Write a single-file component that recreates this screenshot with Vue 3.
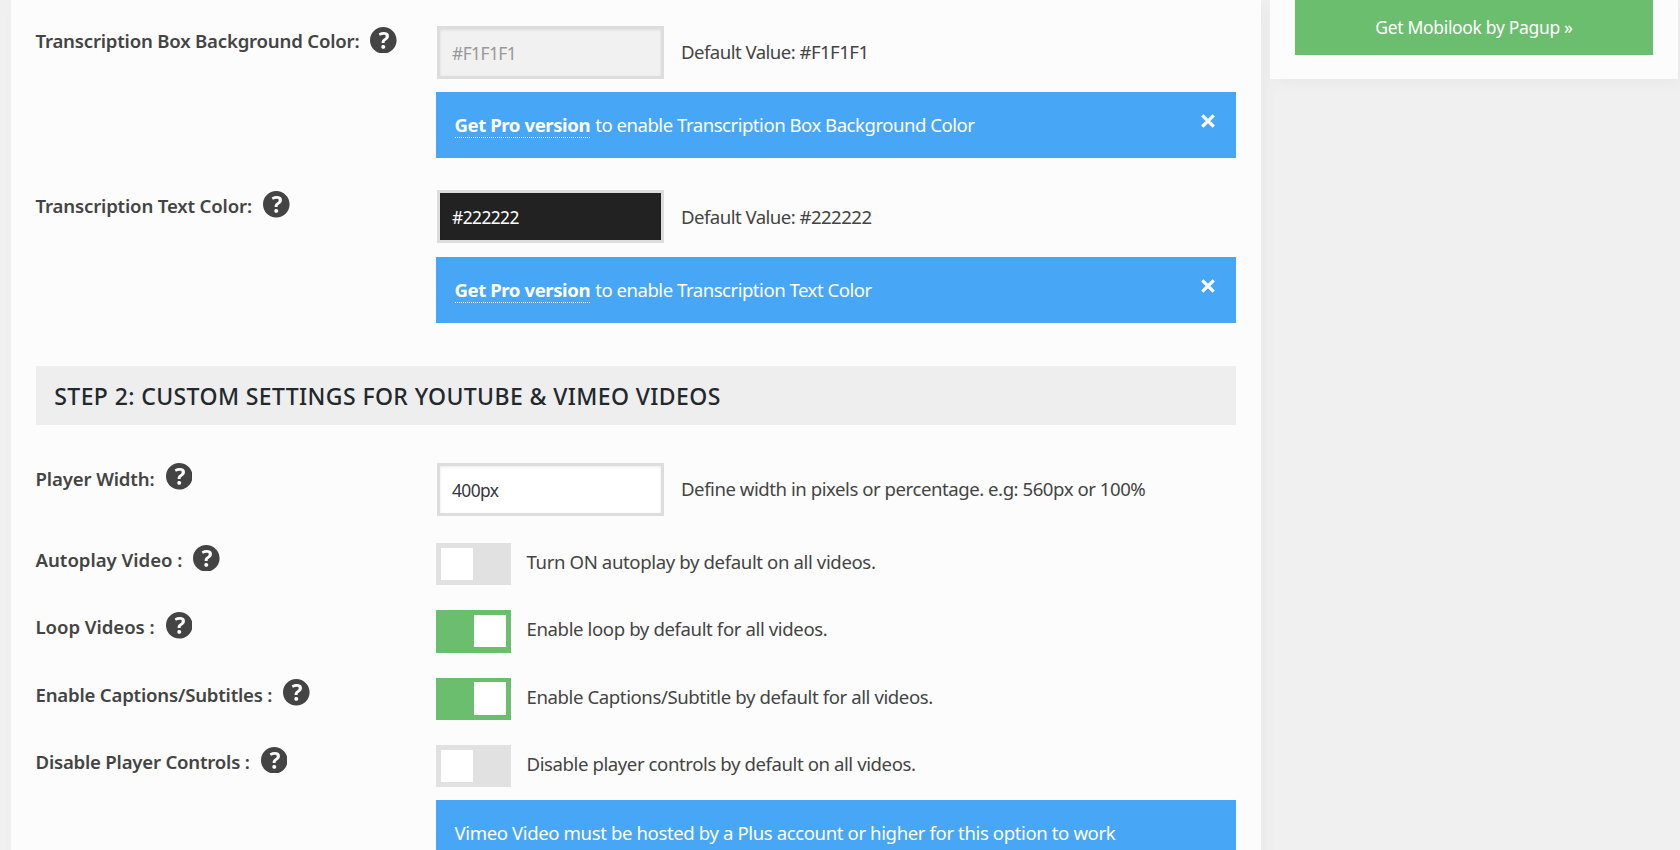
<script setup>
const proRows = [
  {
    label: 'Transcription Box Background Color:', labelTracking: -0.2,
    value: '#F1F1F1', kind: 'muted', hint: 'Default Value: #F1F1F1', hintTracking: -0.54,
    notice: 'to enable Transcription Box Background Color',
  },
  {
    label: 'Transcription Text Color:', labelTracking: -0.16,
    value: '#222222', kind: 'dark', hint: 'Default Value: #222222', hintTracking: -0.54,
    notice: 'to enable Transcription Text Color',
  },
]
const toggles = [
  { label: 'Autoplay Video :', labelTracking: -0.01, on: false, text: 'Turn ON autoplay by default on all videos.', tracking: -0.38 },
  { label: 'Loop Videos :', labelTracking: -0.05, on: true, text: 'Enable loop by default for all videos.', tracking: -0.39 },
  { label: 'Enable Captions/Subtitles :', labelTracking: -0.2, on: true, text: 'Enable Captions/Subtitle by default for all videos.', tracking: -0.41 },
  { label: 'Disable Player Controls :', labelTracking: -0.21, on: false, text: 'Disable player controls by default on all videos.', tracking: -0.42 },
]
const helpPath = 'M17 10c0-3.87-3.14-7-7-7-3.87 0-7 3.13-7 7s3.13 7 7 7c3.86 0 7-3.13 7-7zm-6.3 1.48H9.14v-.43c0-.38.08-.7.24-.98s.46-.57.88-.89c.41-.29.68-.53.81-.71.14-.18.2-.39.2-.62 0-.25-.09-.44-.28-.58-.19-.13-.45-.19-.79-.19-.58 0-1.25.19-2 .57l-.64-1.28c.87-.49 1.8-.74 2.77-.74.81 0 1.45.2 1.92.58.48.39.71.91.71 1.55 0 .43-.09.8-.29 1.11-.19.32-.57.67-1.11 1.06-.38.28-.61.49-.71.63-.1.15-.15.34-.15.57v.35zm-1.47 2.74c-.18-.17-.27-.42-.27-.73 0-.33.08-.58.26-.75s.43-.25.77-.25c.32 0 .57.09.75.26s.27.42.27.74c0 .3-.09.55-.27.72-.18.18-.43.27-.75.27-.33 0-.58-.09-.76-.27z'
const px = (n) => ({ letterSpacing: n + 'px' })
</script>

<template>
  <div class="page">
    <main class="panel">
      <section v-for="row in proRows" :key="row.label" class="row pro-row">
        <div class="label">
          <span :style="px(row.labelTracking)">{{ row.label }}</span>
          <svg class="help" viewBox="3 3 14 14"><path :d="helpPath" /></svg>
        </div>
        <div class="control">
          <div class="field">
            <input :class="['box', row.kind]" :value="row.value" readonly />
            <span class="hint" :style="px(row.hintTracking)">{{ row.hint }}</span>
          </div>
          <div class="notice">
            <p><a class="pro">Get Pro version</a> <span>{{ row.notice }}</span></p>
            <svg class="close" viewBox="0 0 14 14"><path d="M2 2l10 10M12 2L2 12" /></svg>
          </div>
        </div>
      </section>

      <h2 class="step">STEP 2: CUSTOM SETTINGS FOR YOUTUBE &amp; VIMEO VIDEOS</h2>

      <section class="row width-row">
        <div class="label">
          <span class="width-label">Player Width:</span>
          <svg class="help" viewBox="3 3 14 14"><path :d="helpPath" /></svg>
        </div>
        <div class="field">
          <input class="box" value="400px" readonly />
          <span class="hint width-hint">Define width in pixels or percentage. e.g: 560px or 100%</span>
        </div>
      </section>

      <section v-for="t in toggles" :key="t.label" class="row toggle-row">
        <div class="label">
          <span :style="px(t.labelTracking)">{{ t.label }}</span>
          <svg class="help" viewBox="3 3 14 14"><path :d="helpPath" /></svg>
        </div>
        <div class="switch-line">
          <span :class="['switch', { on: t.on }]"><i></i></span>
          <span class="switch-text" :style="px(t.tracking)">{{ t.text }}</span>
        </div>
      </section>

      <div class="row last-row">
        <div></div>
        <div class="notice"><p class="vimeo">Vimeo Video must be hosted by a Plus account or higher for this option to work</p></div>
      </div>
    </main>

    <aside class="side">
      <a class="cta">Get Mobilook by Pagup »</a>
    </aside>
  </div>
</template>

<style>
body { margin: 0; background: #f0f0f0; overflow: hidden; }
</style>

<style scoped>
.page {
  display: flex;
  align-items: flex-start;
  gap: 9px;
  box-sizing: border-box;
  width: 1680px;
  height: 850px;
  padding-left: 11px;
  overflow: hidden;
  background: #f0f0f0;
  color: #444;
  font-family: "Noto Sans", "Open Sans", sans-serif;
  font-size: 18.6px;
  font-weight: 400;
  line-height: 26px;
}
.panel {
  flex: none;
  box-sizing: border-box;
  width: 1250px;
  height: 900px;
  padding: 25.7px 25px 0;
  background: #fcfcfc;
  box-shadow: 5px 5px 15px rgba(0, 0, 0, 0.03);
}
.row { display: grid; grid-template-columns: 400px 800px; }
.pro-row { height: 164.6px; }
.label {
  display: flex;
  align-items: flex-start;
  gap: 11px;
  height: 30px;
  margin-left: -0.5px;
  font-weight: 600;
  white-space: nowrap;
}
.width-row .label span { padding-top: 3px; }
.pro-row .label span { padding-top: 2.5px; }
.pro-row .label .help { margin-top: 1px; }
.width-label { letter-spacing: -0.13px; }
.help { flex: none; width: 26.6px; height: 26.6px; fill: #444; }
.field { display: flex; gap: 17px; }
.box {
  box-sizing: border-box;
  width: 227px;
  height: 53.1px;
  margin-left: 1px;
  padding: 0 12px;
  border: 3px solid #ddd;
  border-radius: 0;
  background: #fff;
  box-shadow: inset 0 1px 3px rgba(0, 0, 0, 0.09);
  color: #32373c;
  font: inherit;
  font-size: 17.4px;
  letter-spacing: -0.58px;
  outline: none;
}
.box.muted { padding-top: 1px; background: #f1f1f1; color: #999; }
.box.dark { background: #222; color: #fff; }
.hint { padding-top: 13.5px; white-space: nowrap; }
.width-hint { letter-spacing: -0.46px; }
.notice {
  display: flex;
  justify-content: space-between;
  box-sizing: border-box;
  height: 66px;
  margin-top: 13.2px;
  padding: 20px 20px 0 18.5px;
  background: #48a6f6;
  color: #fff;
}
.notice p { margin: 0; white-space: nowrap; letter-spacing: -0.5px; }
.notice p span { margin-left: 0.8px; }
.notice .vimeo { letter-spacing: -0.4px; }
.pro {
  display: inline-block;
  height: 25px;
  border-bottom: 1px dotted #fff;
  font-weight: 700;
  line-height: 26px;
  letter-spacing: -0.43px;
}
.close { width: 16px; height: 16px; margin-top: 1.5px; fill: none; stroke: #fff; stroke-width: 2.8; }
.step {
  box-sizing: border-box;
  height: 59px;
  margin: 11.1px 0 38px;
  padding-left: 18.3px;
  background: #eee;
  color: #23282d;
  font-size: 23px;
  font-weight: 500;
  line-height: 60px;
  letter-spacing: 0.39px;
  white-space: nowrap;
}
.width-row { height: 79.9px; }
.toggle-row { height: 67.4px; }
.toggle-row .label span { padding-top: 4px; }
.toggle-row .label .help { margin-top: 1.8px; }
.switch-line { display: flex; gap: 15.5px; }
.switch {
  flex: none;
  box-sizing: border-box;
  width: 75px;
  height: 42.4px;
  padding: 4.8px;
  background: #e1e1e1;
}
.switch i { display: block; width: 32.2px; height: 32.4px; background: #fff; }
.switch.on { background: #6bbe6e; }
.switch.on i { margin-left: auto; }
.switch-text { padding-top: 6px; white-space: nowrap; }
.last-row { margin-top: -12.5px; }
.last-row .notice { margin-top: 0; }
.side {
  box-sizing: border-box;
  width: 408px;
  height: 79px;
  padding: 0 25px;
  background: #fcfcfc;
  box-shadow: 5px 5px 15px rgba(0, 0, 0, 0.03);
}
.cta {
  display: block;
  height: 55px;
  background: #6bbe6e;
  color: #fff;
  font-size: 17.5px;
  line-height: 55px;
  letter-spacing: -0.33px;
  text-align: center;
}
</style>
